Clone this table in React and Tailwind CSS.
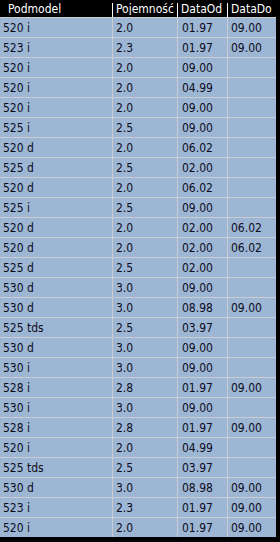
import React from "react";

const rows = [
  ["520 i", "2.0", "01.97", "09.00"],
  ["523 i", "2.3", "01.97", "09.00"],
  ["520 i", "2.0", "09.00", ""],
  ["520 i", "2.0", "04.99", ""],
  ["520 i", "2.0", "09.00", ""],
  ["525 i", "2.5", "09.00", ""],
  ["520 d", "2.0", "06.02", ""],
  ["525 d", "2.5", "02.00", ""],
  ["520 d", "2.0", "06.02", ""],
  ["525 i", "2.5", "09.00", ""],
  ["520 d", "2.0", "02.00", "06.02"],
  ["520 d", "2.0", "02.00", "06.02"],
  ["525 d", "2.5", "02.00", ""],
  ["530 d", "3.0", "09.00", ""],
  ["530 d", "3.0", "08.98", "09.00"],
  ["525 tds", "2.5", "03.97", ""],
  ["530 d", "3.0", "09.00", ""],
  ["530 i", "3.0", "09.00", ""],
  ["528 i", "2.8", "01.97", "09.00"],
  ["530 i", "3.0", "09.00", ""],
  ["528 i", "2.8", "01.97", "09.00"],
  ["520 i", "2.0", "04.99", ""],
  ["525 tds", "2.5", "03.97", ""],
  ["530 d", "3.0", "08.98", "09.00"],
  ["523 i", "2.3", "01.97", "09.00"],
  ["520 i", "2.0", "01.97", "09.00"],
];

const font = { fontFamily: '"DejaVu Sans Condensed", "Noto Sans", sans-serif' };

export default function App() {
  return (
    <div
      className="w-[280px] h-[542px] bg-black overflow-hidden text-[12px] leading-none"
      style={font}
    >
      <div className="w-[276px] flex flex-col">
        <div className="h-[17px] flex text-white items-center">
          <div className="w-[112px] pl-[8px] pt-[1px] whitespace-nowrap">Podmodel</div>
          <div className="w-[1px] h-[14px] self-end bg-white" />
          <div className="w-[64px] pl-[3px] pt-[1px] whitespace-nowrap overflow-hidden">Pojemność</div>
          <div className="w-[1px] h-[14px] self-end bg-white" />
          <div className="w-[49px] pl-[3px] pt-[1px] whitespace-nowrap overflow-hidden">DataOd</div>
          <div className="w-[1px] h-[14px] self-end bg-white" />
          <div className="flex-1 pl-[3px] pt-[1px] whitespace-nowrap overflow-hidden">DataDo</div>
        </div>
        {rows.map((r, i) => (
          <div
            key={i}
            className="h-[20px] flex border-t border-[#c9cdd2] bg-[#9db6d4] text-[#0c0c1c]"
          >
            <div className="w-[112px] pl-[3px] flex items-center">{r[0]}</div>
            <div className="w-[1px] bg-[#c9cdd2]" />
            <div className="w-[64px] pl-[3px] flex items-center">{r[1]}</div>
            <div className="w-[1px] bg-[#c9cdd2]" />
            <div className="w-[49px] pl-[4px] flex items-center">{r[2]}</div>
            <div className="w-[1px] bg-[#c9cdd2]" />
            <div className="flex-1 pl-[3px] flex items-center">{r[3]}</div>
          </div>
        ))}
      </div>
    </div>
  );
}
